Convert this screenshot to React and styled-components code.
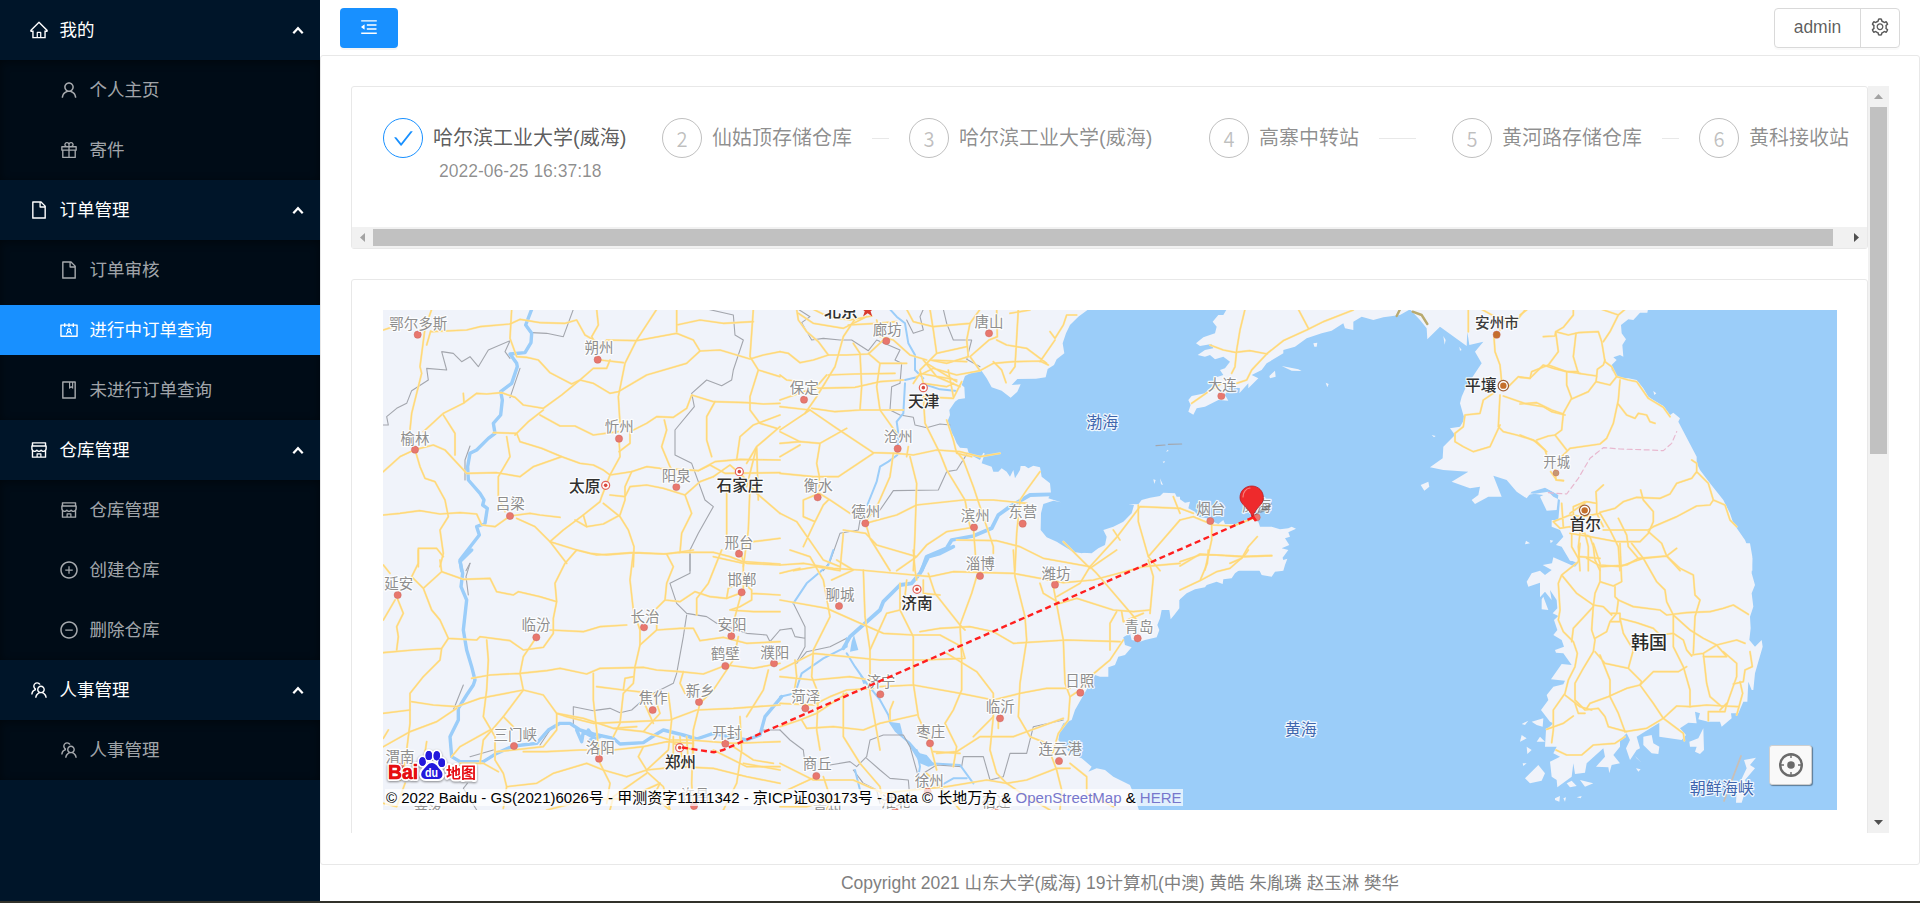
import React from "react";
import styled, { createGlobalStyle, css } from "styled-components";
import {
  AiOutlineHome,
  AiOutlineUser,
  AiOutlineGift,
  AiOutlineFile,
  AiOutlineContacts,
  AiOutlineBook,
  AiOutlineShop,
  AiOutlinePlusCircle,
  AiOutlineMinusCircle,
  AiOutlineTeam,
  AiOutlineMenuFold,
  AiOutlineSetting,
  AiOutlineCheck,
} from "react-icons/ai";

const GlobalStyle = createGlobalStyle`
  *, *::before, *::after { box-sizing: border-box; }
  body {
    margin: 0;
    background: #fff;
    font-family: "Liberation Sans", "Noto Sans CJK SC", sans-serif;
    font-size: 17.5px;
    color: rgba(0, 0, 0, 0.65);
    overflow: hidden;
  }
`;

const Page = styled.div`
  display: flex;
  flex-direction: column;
  height: 903px;
`;
const Shell = styled.div`
  display: flex;
  flex: 1;
  min-height: 0;
`;
const BottomEdge = styled.div`
  height: 2px;
  background: #31312a;
`;

/* ---------- sidebar ---------- */
const Sidebar = styled.nav`
  width: 320px;
  flex: none;
  background: #001529;
`;
const MenuTitle = styled.div`
  display: flex;
  align-items: center;
  height: 60px;
  padding: 0 16px 0 29px;
  color: #fff;
  white-space: nowrap;
  svg { flex: none; }
`;
const Arrow = styled.svg`
  margin-left: auto;
`;
const Label = styled.span`
  padding-bottom: 3px;
`;
const MenuLabel = styled(Label)`
  margin-left: 10.5px;
`;
const SubMenu = styled.div`
  display: flex;
  flex-direction: column;
  background: #000c17;
  box-shadow: inset 0 2px 10px rgba(0, 0, 0, 0.45);
`;
const MenuItem = styled.div`
  display: flex;
  align-items: center;
  height: 50px;
  margin: 5px 0;
  padding-left: 59px;
  white-space: nowrap;
  color: rgba(255, 255, 255, 0.65);
  ${(p) => p.$active && css`
    background: #1890ff;
    color: #fff;
  `}
`;

/* ---------- header and footer ---------- */
const Main = styled.div`
  display: flex;
  flex-direction: column;
  flex: 1;
  min-width: 0;
`;
const Header = styled.header`
  display: flex;
  justify-content: space-between;
  align-items: flex-start;
  height: 55px;
  padding: 8px 20px 0;
`;
const FoldButton = styled.button`
  display: flex;
  justify-content: center;
  align-items: center;
  width: 58px;
  height: 40px;
  padding: 0 0 2px;
  border: 0;
  border-radius: 4px;
  background: #1890ff;
  color: #fff;
  box-shadow: 0 2px 0 rgba(0, 0, 0, 0.04);
`;
const UserGroup = styled.div`
  display: flex;
  width: 126px;
  height: 40px;
  border: 1px solid #d9d9d9;
  border-radius: 4px;
  box-shadow: 0 2px 0 rgba(0, 0, 0, 0.02);
`;
const UserName = styled.div`
  display: flex;
  align-items: center;
  justify-content: center;
  width: 86px;
  padding-bottom: 2px;
  border-right: 1px solid #d9d9d9;
`;
const UserSetting = styled.div`
  display: flex;
  flex: 1;
  align-items: center;
  justify-content: center;
  padding-bottom: 2px;
`;
const Footer = styled.footer`
  display: flex;
  align-items: center;
  justify-content: center;
  height: 36px;
  padding-bottom: 3px;
  color: #7f7f7f;
  white-space: nowrap;
`;

/* ---------- content ---------- */
const Content = styled.main`
  display: flex;
  flex: 1;
  min-height: 0;
  padding: 30px 30px 31px;
  border: 1px solid #e8e8e8;
  border-radius: 3px;
`;
const ScrollBody = styled.div`
  display: flex;
  flex-direction: column;
  gap: 30px;
  flex: 1;
  min-width: 0;
  overflow: hidden;
`;
const Card = styled.section`
  flex: none;
  display: flex;
  flex-direction: column;
  height: ${(p) => p.$height}px;
  border: 1px solid #e8e8e8;
  border-radius: 3px;
`;
const Steps = styled.div`
  display: flex;
  flex: 1;
  padding: 31px 0 0 31px;
`;
const Step = styled.div`
  display: flex;
  flex: none;
  gap: 10px;
  width: ${(p) => p.$width}px;
  padding-right: ${(p) => p.$gap}px;
`;
const StepIcon = styled.div`
  display: flex;
  flex: none;
  align-items: center;
  justify-content: center;
  width: 40px;
  height: 40px;
  border: 1px solid ${(p) => (p.$done ? "#1890ff" : "rgba(0,0,0,.25)")};
  border-radius: 50%;
  color: ${(p) => (p.$done ? "#1890ff" : "rgba(0,0,0,.25)")};
  font-family: "Noto Sans CJK SC", sans-serif;
  font-size: 20px;
`;
const StepText = styled.div`
  flex: 1;
  min-width: 0;
  white-space: nowrap;
`;
const StepTitle = styled.div`
  display: flex;
  align-items: center;
  gap: 20px;
  height: 40px;
  font-size: 20px;
  color: ${(p) => (p.$done ? "rgba(0,0,0,.65)" : "rgba(0,0,0,.45)")};
`;
const StepLine = styled.i`
  flex: 1;
  height: 1px;
  background: #e8e8e8;
`;
const StepTime = styled.div`
  padding-left: 6px;
  line-height: 26px;
  color: rgba(0, 0, 0, 0.45);
`;

/* ---------- scroll bars ---------- */
const HBar = styled.div`
  display: flex;
  align-items: center;
  flex: none;
  height: 21px;
  background: #f1f1f1;
`;
const VBar = styled.div`
  display: flex;
  flex-direction: column;
  align-items: center;
  flex: none;
  width: 21px;
  background: #f1f1f1;
`;
const HThumb = styled.div`
  width: 1460px;
  height: 17px;
  background: #c1c1c1;
`;
const VThumb = styled.div`
  width: 17px;
  height: 347px;
  background: #c1c1c1;
`;
const BarButton = styled.div`
  display: flex;
  align-items: center;
  justify-content: center;
  width: 21px;
  height: 21px;
  ${(p) => p.$end === "right" && "margin-left: auto;"}
  ${(p) => p.$end === "bottom" && "margin-top: auto;"}
`;
const ends = { left: 0, up: 90, right: 180, bottom: 270 };
const BarArrow = ({ to, off }) => (
  <BarButton $end={to}>
    <svg width="11" height="11" viewBox="0 0 11 11">
      <path
        d="M3 5.5 8 1v9z"
        fill={off ? "#a3a3a3" : "#505050"}
        transform={`rotate(${ends[to]} 5.5 5.5)`}
      />
    </svg>
  </BarButton>
);

/* ---------- map ---------- */
const MapFrame = styled.div`
  position: relative;
  width: 1454px;
  height: 500px;
  margin: 30px 0 0 31px;
  overflow: hidden;
  background: #f0f3fa;
`;
const MapDrawing = styled.svg`
  display: block;
  font-family: "Noto Sans CJK SC", sans-serif;
`;
const Attribution = styled.div`
  position: absolute;
  left: 2px;
  bottom: 4px;
  height: 17px;
  padding: 0 1px;
  line-height: 17px;
  font-size: 15px;
  color: #000;
  white-space: nowrap;
  background: rgba(255, 255, 255, 0.7);
  a { color: #7777cc; }
`;
const LocateButton = styled.button`
  position: absolute;
  right: 25px;
  bottom: 25px;
  display: flex;
  align-items: center;
  justify-content: center;
  width: 43px;
  height: 40px;
  padding: 0;
  border: 1px solid #cfcfcf;
  border-radius: 3px;
  background: #f9f9f9;
  box-shadow: 1px 1px 1px rgba(0, 0, 0, 0.4);
`;

/* Every map tile has its own origin on the page; its paths are in thirds of a pixel. */
const tiles = [
  {
    x: 380, y: 300,
    rivers: ["M455 28 437 75 455 100 453 128 435 158 390 162 410 190 412 200 395 250 362 275 367 300 362 345 340 370 345 400 325 415 290 450 270 460 263 500 265 540 300 580 312 600 308 615 322 625 315 670 290 680 298 705 240 780 245 812"],
    roads: [
      "M155 28 135 85 120 200 125 220 110 280 95 340 90 390M152 93 140 135M155 95 260 90 300 80 390 72 420 58 480 68 555 70 590 60 615 105 650 125",
      "M10 90 40 80M395 28 390 115 410 170 440 172 475 180 510 218 575 252 600 240 640 250 690 280 715 275 800 225 920 190 960 153 1020 150 1110 177 1150 165 1200 155",
      "M650 28 655 75 635 110 655 145 680 120 770 122 890 100 940 120 960 153M830 28 770 120 735 190 725 240 715 290 720 370M890 28 890 95M890 75 960 60 1030 70 1120 65",
      "M1120 28 1110 170 1135 210 1110 290 1110 330 1140 370 1190 385M1135 210 1200 230M660 180 730 188M690 180 680 205 640 205 600 240 545 285 490 325 430 315 405 292 365 278 320 282 290 280 250 310 190 340 130 395",
      "M250 280 252 308M190 345 225 400 225 465M490 330 445 365 405 405M480 345 540 378 585 378 640 405 715 395",
      "M105 449 60 470 10 515M105 449 120 500 135 535 165 545 195 600 205 650 180 690 190 760 180 800M105 449 160 435 195 450 260 520 350 518 420 530 460 500 545 470 485 445 420 425 410 400 340 398",
      "M380 410 390 470 355 530 355 590 375 635M10 645 60 640 120 632 180 642 240 638 290 642 305 675 345 680 390 648 450 640 480 645 540 652",
      "M545 470 600 490 640 495 670 510 690 525 755 515 800 500 840 505 955 512 1005 485 1080 478 1200 480M717 416 720 470 690 525 665 590 660 605 610 645 550 690 510 725",
      "M717 455 750 430 750 395 800 370 830 350 880 352 920 325 935 285 1000 305 1100 308 1150 312 1200 310M853 360 860 390 845 440 870 500 885 525",
      "M1005 305 980 350 980 420 995 470M755 515 735 560 735 600 720 645 670 672 620 680 585 660M690 585 735 590 750 560 800 555 850 565 915 585 960 545 1000 530",
      "M915 585 935 640 905 700 900 758M670 610 720 650 745 690 762 740 760 800M410 655 465 680 510 725 590 750 650 765 760 758 850 762 900 757 1000 757 1050 770 1100 790 1200 795M610 645 620 680M510 725 560 790",
      "M955 512 990 495 1035 520 1200 518M1000 530 1050 495 1090 530 1130 580 1200 640M1070 480 1080 410 1120 375 1200 345M1100 560 1130 440 1135 600M1040 560 1040 720M1110 560 1105 690 1090 800M1100 490 1130 440 1200 380M1120 725 1200 715",
      "M115 800 115 745 170 745 190 770",
    ],
    borders: ["M10 375 25 375 20 350 50 325 80 310 95 272 145 240 140 205 200 210 185 155 220 160 245 185 270 170 295 200 325 150 390 122 375 155 390 175M455 98 500 100 550 110 580 28M420 205 390 293M270 438 255 480 255 540M985 28 1060 45 1065 105 1090 120 1060 210 1055 240 1025 257 980 240 935 280 943 320 885 390 885 465 935 490 975 600 1000 620 955 700 930 750 930 812M270 790 258 812"],
    labels: [
      ["鄂尔多斯", 115, 72, 113, 104], ["朔州", 657, 145, 653, 179], ["榆林", 105, 417, 105, 449],
      ["忻州", 718, 382, 717, 416], ["阳泉", 889, 527, 889, 561], ["吕梁", 391, 613, 390, 648],
      ["邢台", 1077, 729, 1077, 761], ["太原", 614, 559, 677, 556, "capital"], ["石家庄", 1080, 556, 1078, 515, "capital"],
    ],
  },
  {
    x: 780, y: 300,
    sea: ["M925 28 895 50 870 75 858 100 848 130 853 160 830 178 822 195 803 207 797 232 768 236 712 237 695 255 722 253 712 275 692 293 665 272 635 262 620 235 605 213 580 215 555 228 545 255 553 262 555 295 535 298 525 305 508 330 510 345 502 365 510 390 522 410 530 430 540 443 562 445 567 462 600 480 610 458 614 460 605 490 635 500 640 515 655 515 665 505 680 515 690 530 700 510 705 535 720 510 722 498 735 498 745 505 760 497 780 502 785 530 810 550 813 580 805 595 843 607 820 602 790 612 783 640 782 690 800 712 830 725 870 750 880 757 935 760 955 745 975 735 980 710 970 690 1000 680 1030 665 1055 640 1062 615 1045 612 1075 613 1085 600 1110 593 1140 588 1150 578 1185 580 1190 590 1210 590 1210 28z"],
    islands: ["M1158 455 1163 449 1166 453zM1148 485 1155 483 1152 490zM1120 538 1127 540 1123 552zM1140 535 1149 555 1143 553z"],
    rivers: ["M330 28 350 50 375 70 385 130 405 165 405 210 430 235M375 240 410 232M375 250 370 340 350 365 355 400 352 465 325 485 300 500 290 545 262 615", "M440 255 480 268 530 273"],
    wide: ["M813 583 750 585 690 620 655 645 635 685 580 708 515 720 500 745 440 770 425 812"],
    roads: [
      "M50 28 55 60 80 95 115 125 145 165 200 165 265 162 310 120M55 40 100 70 190 85 260 50M100 28 145 50 210 60 275 48",
      "M75 340 110 290 165 200 190 110 230 50M205 75 290 70 350 65M0 155 25 160 60 188 100 180 145 165M0 225 20 240 60 245M0 300 100 265 225 262 300 245 370 240",
      "M220 130 240 160 245 260 240 330M145 225 225 222 345 220M140 225 110 260M95 325 165 335 240 330 370 330M265 160 300 190 290 260 300 330 350 400M300 190 380 190M0 320 90 330 170 385 280 458 350 460 400 465 470 450 540 455 600 470 660 460",
      "M90 330 0 390M0 395 60 425 120 430 200 385M120 430 110 490 118 530 118 580M0 470 60 435M0 520 100 530 175 530 280 460M290 60 300 110 340 120 390 165 440 180M380 28 400 65 460 80 570 70 600 28",
      "M450 28 460 90 470 160 450 180M570 70 560 120 565 170 500 190 450 180 420 210 430 250 500 260 520 250M430 180 470 230 540 260M440 190 530 245M410 230 460 205 530 225 600 212M400 250 420 220 530 240M450 180 560 185M505 210 520 290M430 290 520 295 545 245",
      "M470 160 560 140M650 28 652 110 627 120 570 170 600 212 640 190 700 185 780 183 805 195M650 120 680 135 740 145 800 190M715 28 705 200 690 220M640 185 665 210 678 248M690 40 750 30M890 45 860 45 850 75 825 115 810 95M825 120 780 185",
      "M430 290 435 370 480 460 500 510 555 600 570 680M390 470 410 550 405 700 400 812M530 455 550 480 580 560 600 620 640 740 640 760M500 360 520 420 530 460 575 470M385 440 380 470M340 460 330 530 295 610 257 665",
      "M118 580 150 600 210 640M118 580 70 600 70 650 105 665 70 740M0 640 50 665 130 780 180 800M105 665 130 615 145 600M257 670 350 645 410 615 550 600 640 600 740 610M780 515 740 570 720 600 710 700 705 812M530 720 650 722 720 740 790 775 930 800 1010 712 1080 620 1200 625",
      "M1075 615 1075 665 1105 770 1140 812M1000 690 1020 720M1200 640 1180 590M1105 770 1200 660M350 812 410 770 440 735 500 695 580 682 590 812M257 670 270 715 330 812M190 700 180 812M190 690 257 700 290 735 410 770M0 430 60 425M40 812 110 800 180 812",
    ],
    borders: ["M65 68 90 50 55 28M65 68 95 120 130 115 180 120 215 120 265 152 290 120 360 150 345 180 365 190 360 250 335 260 330 330 360 345 400 352 405 375 440 383 480 372 510 375M380 60 400 100 430 90 420 50 430 28M490 28 500 70 520 120 575 120 560 178 600 200M562 460 530 510 500 515 475 570 340 572 300 630 240 660 235 690 180 700 150 785 130 812", "M1128 437 1155 435M1165 433 1205 432"],
    labels: [
      ["北京", 183, 33, 263, 30, "beijing"], ["廊坊", 322, 90, 319, 123], ["唐山", 627, 66, 627, 100],
      ["天津", 431, 306, 430, 263, "capital"], ["保定", 73, 264, 72, 299], ["沧州", 355, 412, 353, 446],
      ["衡水", 115, 557, 113, 592], ["德州", 257, 636, 256, 670], ["滨州", 586, 649, 582, 682],
      ["东营", 728, 636, 728, 671], ["渤海", 967, 367, 0, 0, "water"],
    ],
  },
  {
    x: 1180, y: 300,
    sea: ["M0 28H1200V812H0z"],
    land: [
      "M140 28 130 45 115 45 98 65 110 80 105 100 70 112 48 130 60 138 95 132 100 145 75 150 53 165 75 170 90 165 105 178 130 170 150 185 135 205 120 210 130 225 100 235 110 250 90 265 75 280 35 288 25 300 32 315 25 335 40 344 50 325 75 320 115 300 145 302 135 285 150 260 180 265 178 280 205 250 205 265 235 235 215 225 245 210 260 190 310 160 310 150 345 140 380 115 425 100 455 92 490 70 495 85 520 90 520 65 545 50 580 60 610 52 660 45 690 28z",
      "M690 28 720 60 740 85 742 118 780 80 860 138 862 95 868 135 910 125 885 155 905 190 875 235 858 260 845 290 840 310 850 345 855 355 840 380 810 385 825 405 790 440 788 475 750 502 790 510 865 515 815 545 870 565 900 560 895 585 875 600 885 612 925 590 965 590 940 527 980 540 1010 575 1040 595 1055 575 1095 563 1150 590 1210 600 1210 28z",
      "M-5 590 0 598 15 608 30 605 25 625 45 635 55 650 80 655 100 665 115 672 130 660 135 672 170 672 190 660 205 665 215 655 235 665 240 680 275 680 300 688 325 685 335 680 348 686 325 697 330 710 315 715 328 735 305 745 325 750 310 770 300 780 300 812H-5z",
      "M400 130 412 128 410 140 403 140zM268 228 285 212 287 230 270 235zM305 198 355 208 365 213 335 212zM405 203 420 200M437 248 446 252 442 262zM348 262 355 268M790 108 797 120 794 134zM755 405 767 408 762 412zM722 555 745 545 748 560 733 572zM838 140 845 150 840 152z",
    ],
    roads: [
      "M195 28 180 90 170 150 165 200 155 220M90 135 130 150 165 157 210 152 262 162M520 30 430 65 380 90 310 122 262 160 215 210 200 240 170 250M355 28 385 85M35 310 85 275 125 250",
      "M0 660 40 650 100 675 160 678 220 655M95 665 95 720 75 810M0 625 40 640M0 785 60 765 110 765 190 770 275 767M232 710 205 740 185 775 150 790",
      "M865 28 865 95M942 110 945 155 960 195 965 245M985 260 1015 230 1050 235 1090 195 1120 205 1160 215 1200 220M960 285 955 380 970 395 1010 405 1060 420 1095 450 1100 465M960 375 930 440 880 455 850 440 825 425 825 400 850 380 855 345 900 340 910 300 940 280",
      "M970 288 1040 312 1090 320 1115 335 1155 345M905 28 945 50 1000 75 1035 30M960 50 960 90M1112 515 1130 540 1150 542",
    ],
    strong: ["M660 28 650 48M698 35 725 45 742 72"],
    labels: [
      ["大连", 127, 254, 124, 288], ["烟台", 92, 627, 91, 663], ["威海", 230, 617, 230, 652],
      ["安州市", 951, 70, 950, 104, "brown"], ["平壤", 902, 257, 970, 257, "abroad"], ["开城", 1130, 487, 1128, 519, "brownSmall"],
    ],
  },
  {
    x: 1520, y: 300,
    land: ["M80 28 80 565 115 585 110 630 80 632 60 590 70 585 30 580 20 585 85 575 100 590 120 600 115 660 95 660 95 680 120 690 130 710 108 735 125 740 150 782 180 785 180 812 697 812 697 775 675 720 640 670 630 640 610 600 570 550 540 510 530 490 530 470 475 365 480 355 460 338 450 345 430 318 400 300 385 290 370 265 350 240 325 235 310 235 290 228 275 210 275 195 290 180 280 172 300 165 310 170 307 135 318 118 305 100 303 75 325 58 340 60 360 38 382 38 384 28zM400 273 409 280 403 285zM18 722 30 730 15 733zM90 720 100 722 92 730z"],
    roads: [
      "M160 28 160 45 130 82 107 95 115 155 85 195 35 215 30 235 0 232M20 30 0 45M70 110 105 108 107 95 145 105 175 98 235 95 245 125 255 185 275 200 290 230 325 240 350 245 385 295 430 322 450 350",
      "M245 28 295 45 270 95 250 125M315 28 295 45M168 100 160 170 175 220 230 228 232 208 250 195 255 180M85 195 140 215 175 215M140 215 140 255 155 295 130 340 125 390 105 405 85 408 50 420",
      "M230 230 228 245 205 275 155 297M228 245 270 255 290 230M300 240 295 300 280 370 260 415 240 432 150 445 125 470M293 310 320 345 345 355 355 340 380 345 390 365 405 370M0 312 50 308 95 330 130 342M105 405 140 450M0 405 50 425 80 455",
      "M515 480 530 490 530 515 515 535 470 550 450 582 420 595 350 592 310 605 285 625 240 637M530 515 565 550 580 600 570 615 530 618 470 650 400 680 385 690 290 690 250 690M580 600 615 615 630 660 650 680",
      "M362 570 370 600 400 635 400 665 385 700 360 725 290 725 210 710 150 700M295 655 320 705 325 740 355 775 440 768 460 790 480 812M385 695 425 730 440 768M240 640 270 690 295 740 300 812M355 775 320 795 245 800 200 775",
      "M105 510 108 540 130 542M150 640 200 605 230 610 230 640 250 680M230 610 228 575 250 555M100 665 150 645 190 650 240 640M100 665 120 685 150 680 210 710 220 740 225 780 240 812M180 700 175 740 180 812M155 700 155 740 175 775M195 700 205 740 205 812M160 650 160 620 195 605M180 770 240 775M125 610 130 680",
    ],
    dmz: ["M85 578 140 582 175 535 210 475 250 443 300 447 390 450 430 452 455 430 470 395"],
    labels: [["首尔", 196, 675, 194, 631, "abroad"]],
  },
  {
    x: 380, y: 550,
    rivers: ["M275 0 240 35 248 70 243 110 260 150 250 240 260 300 275 350 285 390 280 405 260 435 235 475 235 510 210 560 215 620 240 635 310 635 350 610 400 588 470 580 505 540 540 520 570 520 600 540 640 552 700 565 720 582 790 578 825 555 850 540 910 555 950 567 1000 550 1100 570 1140 555 1155 500 1205 440", "M590 540 605 575 610 545 640 562 625 540M630 570 660 560"],
    roads: [
      "M10 210 45 150M10 45 30 70M115 0 115 40 95 80 130 115 185 65 180 30M185 65 250 88 330 85 350 125 400 135 415 125 480 140 530 155M130 115 155 180 180 210 205 265 290 270 300 260 390 272 430 300 490 292 520 250 520 205 530 155 525 100 555 40 590 0",
      "M50 140 70 190 50 230 55 260 50 300M10 308 100 300 185 295 205 265M185 295 180 330 130 380 90 430 90 520 75 640 60 690M590 0 630 10 680 15 760 8 860 12 940 0M760 8 750 90 760 180 780 240 780 285M780 285 765 350 760 400 730 430 720 520 700 560",
      "M860 12 880 50 860 100 855 150 830 175M815 180 830 210 830 240 780 285M510 240 610 245 660 230 740 225M830 240 900 235 940 235 960 272 1030 262 1100 280 1200 275M855 150 900 155 945 125 990 140 1040 145 1080 130M1025 0 985 100 950 145 950 195",
      "M1080 0 1090 35 1200 42M1000 20 1090 40 1090 127M1040 145 1045 115 1085 95 1115 120 1115 150 1080 170 1050 180 1120 185 1200 185M1115 130 1200 135M1085 127 1065 200 1055 260M1075 260 1060 330 1000 420 960 460 940 540 935 700 940 780",
      "M469 262 430 320 420 370 430 420 370 500 310 570 300 640M275 385 330 375 420 370 500 362 540 355 620 372 660 355 790 352 830 360 900 365 970 372 1040 345 1120 355 1200 340M320 270 325 330 320 420 310 500 345 560 345 630 370 670 380 710 370 775",
      "M10 490 90 480M95 455 160 465 230 470 300 445 430 420 490 435 530 490 560 500 640 520 760 515 870 510 950 480 1060 475 1200 465M230 475 170 515 90 545 10 590M530 490 530 540 490 590 400 600 350 605M370 500 400 530",
      "M530 490 610 505 700 535 790 545 870 570 930 570 1060 580 1200 575M640 370 640 450 650 540 660 640 690 700 680 760M650 410 730 420 820 430 840 490 790 545M730 420 735 385 760 380M780 430 820 520M865 430 875 510 865 600 800 660",
      "M430 605 500 605 600 600 700 600 790 590 860 575 940 580M790 590 775 620 800 660 740 680 670 660 620 640 520 670 470 700 380 710M800 665 850 710 870 780M800 660 900 650 1000 655 1100 680 1200 700M1080 500 1085 600 1070 700 1030 780M1165 360 1150 420 1100 500",
      "M880 560 880 640 940 640 940 560M880 580 940 600M900 560 905 620M920 560 925 640M1000 600 1100 650 1200 650M1060 590 1120 630 1180 640M800 670 700 740 690 780M840 700 820 740 870 780M215 620 240 590 330 540M240 640 310 640 355 665M140 575 130 640",
      "M910 365 900 400 915 430M1090 640 1200 660M700 535 770 530M10 565 25 540M10 760 50 770 75 700M500 780 620 750 740 745 840 700",
    ],
    borders: ["M930 0 930 70 870 100 890 160 920 190 980 200 1010 220 1100 250 1160 255 1170 275 1200 240M920 195 910 260 890 370 880 400 800 440 755 480 720 488 690 475 640 482 580 470 580 525M270 40 258 80 265 135M250 405 220 480M510 540 480 585M340 600 270 620M262 700 250 715 290 780M1200 540 1145 540"],
    labels: [
      ["延安", 56, 102, 53, 135], ["临汾", 468, 226, 469, 262], ["长治", 795, 200, 792, 232], ["邯郸", 1086, 91, 1085, 127],
      ["安阳", 1056, 224, 1054, 258], ["鹤壁", 1036, 311, 1036, 348], ["濮阳", 1184, 308, 1182, 340], ["新乡", 961, 422, 957, 456],
      ["焦作", 820, 444, 818, 480], ["三门峡", 406, 554, 402, 588], ["洛阳", 661, 593, 657, 626], ["开封", 1040, 548, 1036, 581],
      ["郑州", 901, 637, 899, 593, "capital"], ["渭南", 60, 620, 60, 650], ["许昌", 945, 735, 942, 768], ["商洛", 145, 785, 145, 830],
    ],
  },
  {
    x: 780, y: 550,
    sea: [
      "M1210 140 1198 150 1198 175 1185 192 1172 208 1168 180 1145 180 1140 205 1132 225 1138 240 1130 262 1095 270 1080 275 1055 270 1050 250 1030 262 1035 285 1055 292 1035 315 1015 320 1005 345 985 352 985 380 960 380 945 375 905 445 885 480 875 510 850 520 840 540 835 570 850 590 880 615 905 625 935 650 925 665 950 655 975 660 1000 680 1050 705 1060 730 1070 760 1080 790 1210 790z",
      "M222 255 235 300 210 305 215 275zM240 375 258 400 250 402zM325 515 360 520 370 560 390 575 420 610 440 615 465 645 445 650 420 640 380 575 345 545zM870 0 940 0 905 10z",
    ],
    rivers: ["M200 310 225 350 260 400 300 450 325 495 330 515M410 600 420 650 415 680M450 640 540 645 580 700M485 705 520 685 560 685M225 660 240 720", "M160 0 145 45 80 100 40 160M200 265 200 290 160 310 130 325 65 370 45 430 0 440"],
    wide: ["M520 -10 480 10 445 20 420 70 395 100 360 105 310 155 300 180 210 260 190 295"],
    roads: [
      "M0 45 70 40 160 55 240 60 400 75 450 80 520 65 700 70 850 98 940 90 1090 50 1200 40M400 0 405 60 410 90M445 70 465 130 540 225 555 240M590 80 575 130 540 225 545 320M700 0 705 80 735 200 740 270 720 400 715 500 750 560 800 580",
      "M30 0 90 20 130 90 150 200 100 300 95 380 115 430 110 540 120 600M250 60 255 200 270 300 270 430 300 600M0 70 60 55M0 150 140 175 230 215 310 250 400 255 480 255 545 290 555 325 430 330 300 330 100 310 0 360",
      "M360 100 360 180 400 260 400 400 415 500 450 580 470 660M380 90 375 140M430 90 430 130 480 135M420 245 480 235 570 230 640 245 700 280 860 270 1020 275M500 310 590 365 640 430 640 500 630 600 650 670 680 700",
      "M545 320 545 420 520 480 495 520 530 590 520 650M300 410 400 405 540 430 640 450 720 430 800 415 870 415M780 100 790 130 840 160 890 145 1000 180 1060 185 1110 180M820 110 850 270 855 400 870 440 865 510 835 550 815 620 830 660",
      "M1105 30 1120 80 1110 190M930 50 900 100 830 140M930 50 950 70 1010 140 1070 210M1010 185 990 220 990 300M850 -25 930 55 1010 0M1030 270 990 330 930 380 900 420 870 440M1025 185 1030 215 1090 190",
      "M0 460 100 465 150 440 200 420 280 415M0 530 60 510 110 490 200 430M65 510 80 535 160 530 250 540 300 520 410 495M330 510 330 480 340 455M0 640 100 690 220 690 310 730 400 720 500 710 620 690 680 700 740 690 830 655 870 655",
      "M470 610 530 605 600 560 700 560 850 505M655 510 655 535M640 500 580 560M540 610 460 605M870 640 920 680 920 730 1000 770M830 660 845 720 840 780M680 700 740 740 810 780M190 430 190 560 240 640 300 710 310 770",
      "M130 680 150 740 140 780M109 680 0 730M440 670 480 710 540 780M0 380 100 390 210 380 270 390M40 440 50 380 45 330M270 300 320 190 360 180M170 30 220 60 155 90M0 770 80 770 190 740",
    ],
    borders: ["M40 160 75 230 75 290 50 335 45 340M0 240 35 235 45 260 75 265M50 340 80 305 150 290 200 265M0 540 30 570 70 600 75 640M150 645 210 635 230 650 260 620 270 570 310 555 370 555 390 590 415 680M220 660 250 700 290 720 300 760M260 625 300 660 330 685 385 690 390 750M430 670 470 645 545 650 550 620 610 620 630 690 670 680 690 610 740 610 760 530 850 510"],
    labels: [
      ["淄博", 601, 43, 600, 78], ["潍坊", 828, 71, 825, 104], ["聊城", 180, 134, 177, 168], ["济南", 411, 161, 411, 118, "capital"],
      ["青岛", 1077, 232, 1073, 265], ["日照", 899, 394, 901, 428], ["济宁", 303, 397, 301, 433], ["菏泽", 77, 440, 76, 475],
      ["临沂", 661, 472, 660, 505], ["枣庄", 452, 545, 450, 580], ["连云港", 841, 598, 837, 633], ["商丘", 112, 643, 109, 678],
      ["徐州", 448, 693, 443, 725], ["亳州", 142, 785, 142, 830], ["淮北", 347, 755, 345, 785], ["宿迁", 648, 755, 645, 785],
    ],
  },
  {
    x: 1180, y: 550,
    sea: ["M0 -2H1200V790H0z"],
    land: ["M-5 -30 300 -30 300 0 310 30 322 26 315 45 310 62 285 65 275 80 245 75 235 55 220 50 215 60 190 52 165 70 155 85 130 88 128 102 110 95 80 105 75 112 45 118 20 130 0 148 -5 150z"],
    roads: ["M0 48 60 12 110 15 190 20 275 17M85 0 82 40 60 92M0 120 60 92 110 65 150 55 195 15 205 0"],
    labels: [["黄海", 362, 537, 0, 0, "water"]],
  },
  {
    x: 1520, y: 550,
    land: [
      "M135 -20 150 30 175 40 165 50 100 22 96 40 68 45 95 60 75 75 60 62 35 70 20 95 25 110 60 98 60 142 75 125 95 150 90 120 110 150 112 175 98 190 115 198 102 210 112 240 100 255 125 270 132 290 105 300 108 308 130 310 155 345 125 342 93 388 135 392 130 403 100 410 80 435 85 450 63 480 90 515 100 520 78 540 75 590 110 590 100 610 120 620 90 635 95 680 110 690 112 712 155 680 160 640 165 672 195 668 200 640 250 595 255 620 228 650 265 652 268 670 275 645 300 640 280 615 300 590 300 570 320 550 330 570 318 595 330 630 350 600 360 595 350 560 418 518 418 560 485 570 498 555 480 535 505 518 530 520 525 485 540 490 535 508 565 515 600 515 605 530 635 505 633 490 655 490 670 455 682 455 685 395 695 420 700 420 705 370 728 290 725 270 705 290 688 270 692 235 690 200 700 170 695 130 705 105 695 70 697 20 690 -20z",
      "M65 148 70 140 85 180 65 178zM370 560 395 555 400 580 418 590 415 612 395 610 370 585zM508 575 535 565 550 535 552 600 540 612 525 605 530 590 510 590zM15 685 55 645 75 670 65 692 30 700zM5 522 25 512 15 525zM35 515 70 505 68 530 50 525zM60 560 75 575 50 575zM5 555 20 565 0 575zM105 745 120 738 118 755 105 750zM170 742 185 738 182 745zM130 745 138 742 135 755zM140 700 155 692 170 708 150 712zM180 690 220 700 195 710zM20 590 35 600 22 612zM345 618 365 638 350 625zM348 655 362 658 355 665zM295 672 310 685zM8 640 20 640 10 648z",
      "M672 630 708 623 690 645 705 655 675 690 680 710 665 758 648 758 650 720 668 680 680 655z",
    ],
    roads: [
      "M180 -20 175 35 125 75 115 100 120 180 115 210 130 245 160 275 172 310 165 350 145 390 135 430 100 480 100 540 95 578M125 75 170 130 220 165 215 240 225 270 220 305 190 355 165 400 165 450 195 480 235 475 255 500 265 530 320 545",
      "M220 -20 240 40 240 95 225 130 220 170 160 235 155 275M240 95 280 108 305 95 300 -20M240 45 300 50 340 35 370 25 440 18 470 -5M440 18 480 55 520 75 525 135 540 150 525 200 520 310",
      "M335 -20 370 25 410 95 435 120 440 155 460 195 460 290 490 350 510 420 510 470M295 150 340 170 420 180 440 195 500 188 570 185 610 175 640 165 685 193M460 195 510 240 550 265 590 285 650 270 675 280",
      "M285 110 285 140 295 150 290 190 270 215 260 245 225 265M300 205 350 218 400 235 420 255 460 250 490 270 500 300 515 318M270 190 300 190 300 215 270 215M220 165 250 170 275 195M300 205 310 250 340 300 325 355M225 305 255 340 325 355 365 395 360 405M240 315 270 390 270 440 295 490 315 545",
      "M200 475 210 460 265 440 320 415 360 405 400 365 475 365 500 350M360 405 400 460 430 505M315 545 380 535 430 505 470 468 510 470 560 465 610 468 655 470M430 505 490 550 493 572M550 310 560 400 570 440 605 470M515 315 550 310 590 285 620 320 550 320M610 305 650 340 650 380 620 465",
      "M690 305 697 350 675 360 670 395 640 402M660 395 668 430 650 495M565 485 565 512M565 485 615 485 620 460 600 480M108 600 140 615 185 615 220 585 285 580 315 560M80 538 130 520 160 498M135 435 180 470 215 480M165 460 175 490 195 490",
    ],
    labels: [["韩国", 387, 277, 0, 0, "country"], ["朝鲜海峡", 605, 714, 0, 0, "water"]],
  },
];

const labelLook = {
  city: { size: 14.5, fill: "#8e8e8e" },
  capital: { size: 15.7, fill: "#303030", weight: 500 },
  beijing: { size: 17, fill: "#303030", weight: 500 },
  brown: { size: 14.6, fill: "#3c3c3c", weight: 500 },
  brownSmall: { size: 13.3, fill: "#8e8e8e" },
  abroad: { size: 15.7, fill: "#303030", weight: 500 },
  country: { size: 18, fill: "#2a2a2a", weight: 500 },
  water: { size: 16, fill: "#3f66ae" },
};

const Layer = ({ name, of = tiles, ...look }) => (
  <g {...look}>
    {of.map((t) =>
      (t[name] || []).map((d, i) => (
        <path
          key={`${t.x}-${t.y}-${i}`}
          d={d}
          transform={`translate(${t.x} ${t.y}) scale(.33333)`}
          vectorEffect="non-scaling-stroke"
        />
      ))
    )}
  </g>
);

const Dot = ({ x, y, kind }) => {
  if (kind === "water" || kind === "country") return null;
  if (kind === "beijing")
    return <path transform={`translate(${x} ${y})`} fill="#d8392e" d="M0-7 1.9-2 7-2 2.9 1.2 4.600 6.400 0 3.200-4.600 6.400-2.900 1.200-7-2-1.900-2z" />;
  if (kind === "capital")
    return (
      <g>
        <circle cx={x} cy={y} r="4" fill="#fff" stroke="#e2655c" strokeWidth="1.2" />
        <circle cx={x} cy={y} r="1.8" fill="#d9483f" />
      </g>
    );
  if (kind === "abroad")
    return (
      <g>
        <circle cx={x} cy={y} r="5.2" fill="#fff" stroke="#9c5c35" strokeWidth="1.2" />
        <circle cx={x} cy={y} r="3.2" fill="#c46f2c" />
      </g>
    );
  const fill = kind === "brown" ? "#c46f2c" : kind === "brownSmall" ? "#c69873" : "#e8776e";
  return <circle cx={x} cy={y} r={kind === "brownSmall" ? 3 : 3.6} fill={fill} stroke="#c8655d" strokeOpacity=".6" strokeWidth=".8" />;
};

const MapView = () => (
  <MapDrawing width="1454" height="500" viewBox="383 310 1454 500">
    <Layer name="sea" fill="#9bcdf9" />
    <path d="M1519 310H1838V810H1519z" fill="#9bcdf9" />
    <Layer name="land" fill="#f0f3fa" />
    <Layer name="islands" fill="#f0f3fa" />
    <g fill="none" strokeLinecap="round" strokeLinejoin="round">
      <Layer name="borders" stroke="#a3a6ad" strokeWidth="1.1" />
      <Layer name="rivers" stroke="#9bcdf9" strokeWidth="2" />
      <Layer name="rivers" of={[tiles[0], tiles[4]]} stroke="#9bcdf9" strokeWidth="3.4" />
      <Layer name="wide" stroke="#9bcdf9" strokeWidth="3.8" />
      <Layer name="roads" stroke="#fbe6ae" strokeWidth="2.1" />
      <Layer name="roads" stroke="#ffd878" strokeWidth="1.2" />
      <Layer name="strong" stroke="#b8a96e" strokeWidth="2.4" />
      <Layer name="dmz" stroke="#e8b8cf" strokeWidth="1.2" strokeDasharray="5 3.5" />
      <path d="M1741 756 1724 801" stroke="#c9bfb6" strokeWidth="1.8" />
    </g>
    {tiles.map((t) =>
      t.labels.map(([name, cx, cy, dx, dy, kind = "city"]) => {
        const look = labelLook[kind];
        return (
          <g key={name}>
            <Dot x={t.x + dx / 3} y={t.y + dy / 3} kind={kind} />
            <text
              x={t.x + cx / 3}
              y={t.y + cy / 3 + look.size * 0.35}
              textAnchor="middle"
              fontSize={look.size}
              fontWeight={look.weight}
              fill={look.fill}
              stroke="#fff"
              strokeOpacity=".85"
              strokeWidth="2.4"
              strokeLinejoin="round"
              paintOrder="stroke"
            >
              {name}
            </text>
          </g>
        );
      })
    )}
    <path d="M682 747.5 714 752.3 723 750 1254 517" fill="none" stroke="#ff1f1f" strokeWidth="2.4" strokeDasharray="6 3.6" />
    <path d="M1252 515l4 6" stroke="#ff1f1f" strokeWidth="2.6" />
    <path d="M1253 516 1264 507 1272 503 1268 510z" fill="#333" opacity=".35" />
    <path d="M1251.7 486c6.600 0 11.700 5 11.700 11.600 0 7.400-7.500 9.400-11 19.400-3.500-10-12.400-12-12.400-19.400 0-6.600 5.100-11.600 11.700-11.600z" fill="#ee2a2c" stroke="#b81c22" strokeWidth=".8" />
    <path d="M1243 497c0-5 3-8.500 7-9" fill="none" stroke="#f8807c" strokeWidth="1.2" strokeLinecap="round" />
    <BaiduLogo />
  </MapDrawing>
);

const PawToes = () => (
  <>
    <ellipse cx="422.5" cy="761.5" rx="3.2" ry="4.3" />
    <ellipse cx="428.8" cy="755.5" rx="3.2" ry="4.6" />
    <ellipse cx="436.8" cy="755.8" rx="3.2" ry="4.6" />
    <ellipse cx="441.7" cy="762.8" rx="3.3" ry="4.3" />
  </>
);

const LogoBody = styled.g`
  filter: drop-shadow(0 1px 1px rgba(0, 0, 0, 0.45));
`;

const BaiduLogo = () => (
  <g fontFamily='"Liberation Sans", "Noto Sans CJK SC", sans-serif' fontWeight="700">
    <LogoBody stroke="#fff" strokeWidth="4" strokeLinejoin="round" paintOrder="stroke">
      <text x="388" y="778.8" fontSize="21" fill="#e60d12" textLength="30" lengthAdjust="spacingAndGlyphs">Bai</text>
      <text x="446" y="777.5" fontSize="15" fill="#e60d12" textLength="30" lengthAdjust="spacingAndGlyphs">地图</text>
      <g fill="#2319dc">
        <PawToes />
        <path d="M432 763c4 0 5.500 4 8 6.500 4 3.500 3 9.500-2 9.500h-12c-5 0-6.500-5.500-2.500-9.500 3-3 4.500-6.500 8.500-6.500z" />
      </g>
    </LogoBody>
    <g fill="#2319dc">
      <PawToes />
    </g>
    <g fill="#e60d12" stroke="#e60d12" strokeWidth=".5">
      <text x="388" y="778.8" fontSize="21" textLength="30" lengthAdjust="spacingAndGlyphs" aria-hidden="true">Bai</text>
    </g>
    <text x="425" y="777" fontSize="12.5" fill="#fff" textLength="13" lengthAdjust="spacingAndGlyphs">du</text>
  </g>
);

const LocateIcon = () => (
  <svg width="26" height="26" viewBox="0 0 26 26" fill="none" stroke="#6b6b6b">
    <circle cx="13" cy="13" r="10.8" strokeWidth="2.4" />
    <circle cx="13" cy="13" r="3.8" fill="#6b6b6b" stroke="none" />
    <path d="M13 2v4M13 20v4M2 13h4M20 13h4" strokeWidth="1.4" />
  </svg>
);

const menu = [
  { icon: AiOutlineHome, title: "我的", items: [[AiOutlineUser, "个人主页"], [AiOutlineGift, "寄件"]] },
  {
    icon: AiOutlineFile,
    title: "订单管理",
    items: [[AiOutlineFile, "订单审核"], [AiOutlineContacts, "进行中订单查询", true], [AiOutlineBook, "未进行订单查询"]],
  },
  {
    icon: AiOutlineShop,
    title: "仓库管理",
    items: [[AiOutlineShop, "仓库管理"], [AiOutlinePlusCircle, "创建仓库"], [AiOutlineMinusCircle, "删除仓库"]],
  },
  { icon: AiOutlineTeam, title: "人事管理", items: [[AiOutlineTeam, "人事管理"]] },
];

const steps = [
  { title: "哈尔滨工业大学(威海)", time: "2022-06-25 16:37:18", width: 279, gap: 36, done: true },
  { title: "仙姑顶存储仓库", width: 247, gap: 20, line: true },
  { title: "哈尔滨工业大学(威海)", width: 300, gap: 36 },
  { title: "高寨中转站", width: 243, gap: 36, line: true },
  { title: "黄河路存储仓库", width: 247, gap: 20, line: true },
  { title: "黄科接收站", width: 160, gap: 0 },
];

export default function App() {
  return (
    <Page>
      <GlobalStyle />
      <Shell>
        <Sidebar>
          {menu.map(({ icon: Icon, title, items }) => (
            <React.Fragment key={title}>
              <MenuTitle>
                <Icon size={20} />
                <MenuLabel>{title}</MenuLabel>
                <Arrow width="12" height="10" viewBox="0 0 12 10" fill="none" stroke="#fff" strokeWidth="2.2">
                  <path d="M1.3 8.300 6 3.200l4.700 5.100" />
                </Arrow>
              </MenuTitle>
              <SubMenu>
                {items.map(([ItemIcon, text, active]) => (
                  <MenuItem key={text} $active={active}>
                    <ItemIcon size={20} />
                    <MenuLabel>{text}</MenuLabel>
                  </MenuItem>
                ))}
              </SubMenu>
            </React.Fragment>
          ))}
        </Sidebar>
        <Main>
          <Header>
            <FoldButton>
              <AiOutlineMenuFold size={20} />
            </FoldButton>
            <UserGroup>
              <UserName>admin</UserName>
              <UserSetting>
                <AiOutlineSetting size={20} />
              </UserSetting>
            </UserGroup>
          </Header>
          <Content>
            <ScrollBody>
              <Card $height={163}>
                <Steps>
                  {steps.map((s, i) => (
                    <Step key={i} $width={s.width} $gap={s.gap}>
                      <StepIcon $done={s.done}>{s.done ? <AiOutlineCheck size={23} /> : i + 1}</StepIcon>
                      <StepText>
                        <StepTitle $done={s.done}>
                          <Label>{s.title}</Label>
                          {s.line && <StepLine />}
                        </StepTitle>
                        {s.time && <StepTime>{s.time}</StepTime>}
                      </StepText>
                    </Step>
                  ))}
                </Steps>
                <HBar>
                  <BarArrow to="left" off />
                  <HThumb />
                  <BarArrow to="right" />
                </HBar>
              </Card>
              <Card $height={590}>
                <MapFrame>
                  <MapView />
                  <LocateButton>
                    <LocateIcon />
                  </LocateButton>
                  <Attribution>
                    © 2022 Baidu - GS(2021)6026号 - 甲测资字11111342 - 京ICP证030173号 - Data © 长地万方 &amp; <a>OpenStreetMap</a> &amp; <a>HERE</a>
                  </Attribution>
                </MapFrame>
              </Card>
            </ScrollBody>
            <VBar>
              <BarArrow to="up" off />
              <VThumb />
              <BarArrow to="bottom" />
            </VBar>
          </Content>
          <Footer>Copyright 2021 山东大学(威海) 19计算机(中澳) 黄皓 朱胤璘 赵玉淋 樊华</Footer>
        </Main>
      </Shell>
      <BottomEdge />
    </Page>
  );
}
